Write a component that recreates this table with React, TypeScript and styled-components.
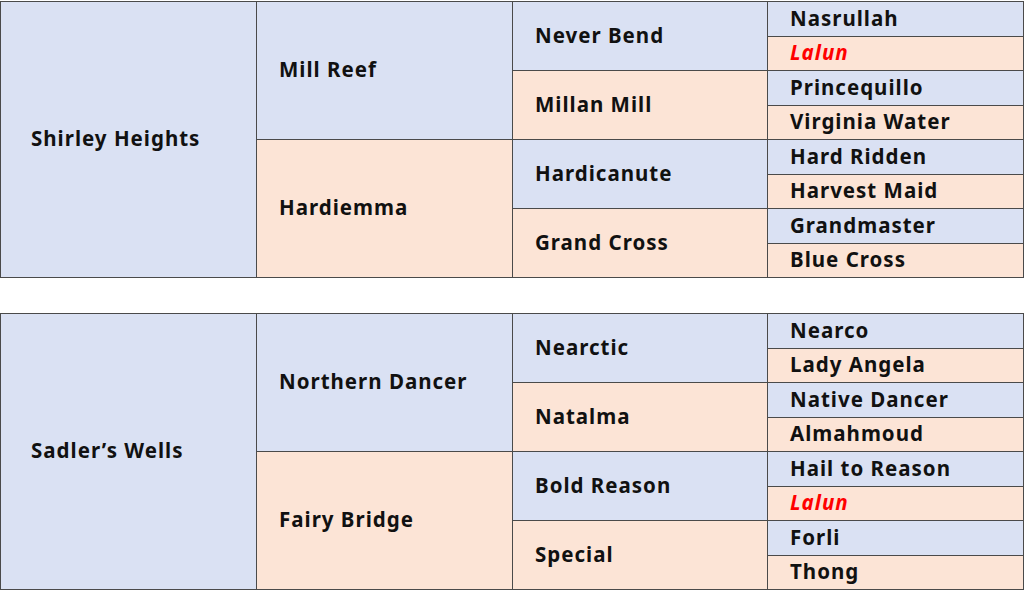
import React from "react";
import styled, { createGlobalStyle } from "styled-components";

const Global = createGlobalStyle`
  html, body { margin: 0; padding: 0; background: #ffffff; }
  body { font-family: "Noto Sans", "Noto Sans CJK JP", sans-serif; }
`;

type Sex = "sire" | "dam";

interface Horse {
  name: string;
  highlight?: boolean;
  sire?: Horse;
  dam?: Horse;
}

const Page = styled.div`
  width: 1024px;
  padding-top: 1px;
  display: flex;
  flex-direction: column;
  gap: 35px;
`;

const Grid = styled.div`
  display: grid;
  grid-template-columns: 256px 256px 255px 256px;
  grid-template-rows: repeat(4, 35px 34px);
  border-top: 1px solid #4a4a4a;
  border-left: 1px solid #4a4a4a;
  box-sizing: border-box;
  width: 1024px;
`;

const Cell = styled.div<{ $sex: Sex; $pad: number }>`
  box-sizing: border-box;
  border-right: 1px solid #4a4a4a;
  border-bottom: 1px solid #4a4a4a;
  background: ${(p) => (p.$sex === "sire" ? "#dae1f3" : "#fce4d6")};
  display: flex;
  align-items: center;
  padding-left: ${(p) => p.$pad}px;
  padding-bottom: 3px;
  font-size: 20.5px;
  letter-spacing: 1px;
  font-weight: 700;
  color: #111111;
  white-space: nowrap;
`;

const Name = styled.span<{ $hl?: boolean }>`
  color: ${(p) => (p.$hl ? "#ff0000" : "#111111")};
  font-style: ${(p) => (p.$hl ? "italic" : "normal")};
`;

const pedigrees: Horse[] = [
  {
    name: "Shirley Heights",
    sire: {
      name: "Mill Reef",
      sire: { name: "Never Bend", sire: { name: "Nasrullah" }, dam: { name: "Lalun", highlight: true } },
      dam: { name: "Millan Mill", sire: { name: "Princequillo" }, dam: { name: "Virginia Water" } },
    },
    dam: {
      name: "Hardiemma",
      sire: { name: "Hardicanute", sire: { name: "Hard Ridden" }, dam: { name: "Harvest Maid" } },
      dam: { name: "Grand Cross", sire: { name: "Grandmaster" }, dam: { name: "Blue Cross" } },
    },
  },
  {
    name: "Sadler\u2019s Wells",
    sire: {
      name: "Northern Dancer",
      sire: { name: "Nearctic", sire: { name: "Nearco" }, dam: { name: "Lady Angela" } },
      dam: { name: "Natalma", sire: { name: "Native Dancer" }, dam: { name: "Almahmoud" } },
    },
    dam: {
      name: "Fairy Bridge",
      sire: { name: "Bold Reason", sire: { name: "Hail to Reason" }, dam: { name: "Lalun", highlight: true } },
      dam: { name: "Special", sire: { name: "Forli" }, dam: { name: "Thong" } },
    },
  },
];

function collect(
  h: Horse,
  gen: number,
  row: number,
  sex: Sex,
  out: React.ReactNode[],
  key: string
) {
  const span = 8 >> gen;
  out.push(
    <Cell
      key={key}
      $sex={sex}
      $pad={gen === 0 ? 30 : 22}
      style={{ gridColumn: gen + 1, gridRow: `${row + 1} / span ${span}` }}
    >
      <Name $hl={h.highlight}>{h.name}</Name>
    </Cell>
  );
  if (h.sire) collect(h.sire, gen + 1, row, "sire", out, key + "s");
  if (h.dam) collect(h.dam, gen + 1, row + span / 2, "dam", out, key + "d");
}

const Pedigree: React.FC<{ horse: Horse }> = ({ horse }) => {
  const cells: React.ReactNode[] = [];
  collect(horse, 0, 0, "sire", cells, "r");
  return <Grid>{cells}</Grid>;
};

export default function App() {
  return (
    <>
      <Global />
      <Page>
        {pedigrees.map((p) => (
          <Pedigree key={p.name} horse={p} />
        ))}
      </Page>
    </>
  );
}
